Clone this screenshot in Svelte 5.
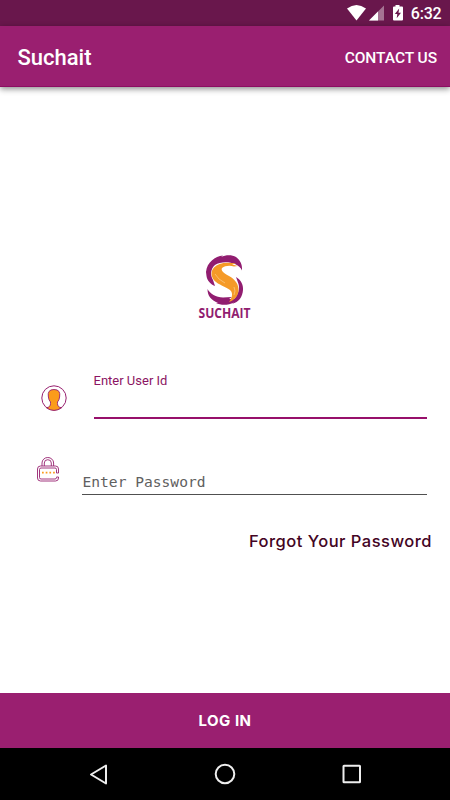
<script lang="ts">
let userId = $state('')
let password = $state('')
</script>

<div class="screen">
  <div class="status">
    <svg class="status__icons" viewBox="0 0 60 26" aria-hidden="true">
      <path d="M0 8.500Q9.500 1.500 19 8.500L9.500 20.500Z" fill="#fff" />
      <path d="M22 20.500L37 5.500V20.500Z" fill="#fff" opacity=".4" />
      <path d="M22 20.500L31 11.500V20.500Z" fill="#fff" />
      <path
        d="M46 6.500h2.500V5h4v1.500H55q1 0 1 1V19.500q0 1-1 1H47q-1 0-1-1V7.500q0-1 1-1ZM52.200 8.500L47.800 14H50.300L49.700 18.300L54 12.700H51.500Z"
        fill="#fff"
        fill-rule="evenodd"
      />
    </svg>
    <span class="status__time">6:32</span>
  </div>

  <header class="toolbar">
    <span class="toolbar__title">Suchait</span>
    <span class="toolbar__action">CONTACT US</span>
  </header>

  <main class="content">
    <svg class="logo" viewBox="0 0 64 76" aria-label="Suchait">
      <g transform="translate(5 0)">
        <g fill="#911d70">
          <path d="M8 19C9 9 17 3.500 25 2.500L23 4C28 1.500 34 1.500 38 4C42 7 44.500 11 44 17.500C43 14.500 40 12.500 37 11C31 8.500 22 8.500 17 12C12.500 16 12 22 15 27L17 33C12 31 9 27 8.500 23Z" />
          <path d="M38 24C43 27 45.500 32 45 37C44.500 44 41 49 34 51L36 49.500C30 52.500 23 52.500 18 50L20 50C13 47 9.500 43 9.500 36C12 41 18 44 25 44.500L34 44L31 46L36 46C40 42 42 36 40.500 31Z" />
        </g>
        <path d="M36 13.500C32 12 27 12.500 24 15C22.500 18 26 20 31 23C37 26.500 41 31 40.500 38C40 43 36.500 47 31 49C34 45 35 41 33 38C30 34.500 23 33 18 29C13 25 12 19 16 14.500C20 10 28 8.500 38 10.500L34 11.500L40 13Z" fill="#f59a27" />
        <path d="M17 21L21 26L27 30M36 34L37 38L36 42" fill="none" stroke="#fbd59d" stroke-width=".6" />
      </g>
      <text x="5.500" y="64.500" textLength="52" lengthAdjust="spacingAndGlyphs">SUCHAIT</text>
    </svg>

    <form class="form" onsubmit={(e) => e.preventDefault()}>
      <div class="user">
        <svg class="user__icon" viewBox="0 0 26 26" aria-hidden="true">
          <circle cx="13" cy="13" r="12.200" fill="#fff" stroke="#97206f" stroke-width="1" />
          <path
            d="M5.500 22.800Q9.700 22 9.500 18.500V17Q7.700 15 7.400 12Q6 4.500 13 4.500T18.600 12Q18.300 15 16.500 17V18.500Q16.300 22 20.500 22.800Q13 28 5.500 22.800Z"
            fill="#fb9c1a"
            stroke="#97206f"
            stroke-width=".9"
          />
        </svg>
        <div class="user__field">
          <label for="user-id">Enter User Id</label>
          <input id="user-id" bind:value={userId} />
        </div>
      </div>

      <div class="password">
        <svg class="password__icon" viewBox="0 0 22 25" aria-hidden="true">
          <g fill="none" stroke="#97206f" stroke-width=".9">
            <path d="M5 9V6A5.800 5.500 0 0 1 16.600 6V9M7.300 9V6A3.500 3.300 0 0 1 14.300 6V9" />
            <path d="M21.500 16V12Q21.500 9 18.500 9H3.500Q.5 9 .5 12V21Q.5 24 3.500 24H18.500Q21.500 24 21.500 21V20H19.500V20.500Q19.500 22 18 22H4Q2.500 22 2.500 20.500V12.500Q2.500 11 4 11H18Q19.500 11 19.500 12.500V16Z" />
          </g>
          <path d="M5 15.700H18" stroke="#fb9c1a" stroke-width="1.700" stroke-dasharray="1.700 2" />
        </svg>
        <input
          class="password__input"
          type="password"
          placeholder="Enter Password"
          bind:value={password}
        />
      </div>

      <span class="forgot">Forgot Your Password</span>
    </form>
  </main>

  <button class="login">LOG IN</button>

  <nav class="navbar">
    <svg viewBox="0 0 24 24"><path d="M19 3.500V21.500L4 12.500Z" /></svg>
    <svg viewBox="0 0 24 24"><circle cx="12" cy="12" r="9.300" /></svg>
    <svg viewBox="0 0 24 24"><rect x="4.500" y="3.700" width="16.500" height="16.500" rx=".5" /></svg>
  </nav>
</div>

<style>
  :global(body) {
    margin: 0;
  }

  .screen {
    display: flex;
    flex-direction: column;
    width: 450px;
    height: 800px;
    background: #fff;
    font-family: Roboto, sans-serif;
    overflow: hidden;
  }

  .status {
    display: flex;
    align-items: center;
    justify-content: flex-end;
    gap: 4px;
    box-sizing: border-box;
    height: 26px;
    padding-right: 8.500px;
    background: #69174c;
    color: #fff;
  }

  .status__icons {
    width: 60px;
    height: 26px;
  }

  .status__time {
    font-size: 16px;
    font-weight: 500;
    line-height: 26px;
    padding-top: 2px;
    letter-spacing: -0.2px;
  }

  .toolbar {
    display: flex;
    align-items: center;
    justify-content: space-between;
    box-sizing: border-box;
    height: 61px;
    padding: 3px 13px 0 17.500px;
    background: #9a1f70;
    border-bottom: 1px solid #8c0d62;
    box-shadow: 0 2px 6px rgba(0, 0, 0, 0.45);
    color: #fff;
  }

  .toolbar__title {
    font-size: 22px;
    font-weight: 500;
  }

  .toolbar__action {
    font-size: 15.500px;
    font-weight: 500;
    letter-spacing: -0.05px;
  }

  .content {
    flex: 1;
    display: flex;
    flex-direction: column;
    padding-top: 166px;
  }

  .logo {
    align-self: center;
    width: 64px;
    height: 76px;
    overflow: visible;
  }

  .logo text {
    font: 700 14px "Open Sans", sans-serif;
    fill: #911d70;
  }

  .form {
    display: flex;
    flex-direction: column;
    padding: 44px 23px 0 37px;
  }

  .user {
    display: flex;
    gap: 27px;
    height: 46px;
    padding-left: 3.500px;
  }

  .user__icon {
    width: 26px;
    height: 26px;
    margin-top: 12px;
  }

  .user__field {
    flex: 1;
    display: flex;
    flex-direction: column;
  }

  .user__field label {
    font-size: 13px;
    line-height: 16px;
    color: #8c1463;
  }

  input {
    box-sizing: border-box;
    min-width: 0;
    padding: 0;
    border: 0;
    border-radius: 0;
    outline: 0;
    background: none;
  }

  .user__field input {
    flex: 1;
    border-bottom: 2px solid #97106b;
    font: 16px Roboto, sans-serif;
  }

  .password {
    display: flex;
    gap: 23px;
    height: 39px;
    margin-top: 37px;
  }

  .password__icon {
    width: 22px;
    height: 25px;
    margin-top: 0.500px;
  }

  .password__input {
    flex: 1;
    padding: 13px 0 0 0.500px;
    border-bottom: 1px solid #505050;
    font: 14.600px "DejaVu Sans Mono", monospace;
  }

  .password__input::placeholder {
    color: #606060;
    opacity: 1;
  }

  .forgot {
    align-self: flex-end;
    margin: 36px -5px 0 0;
    font: 500 16.500px/20px Inter, sans-serif;
    letter-spacing: 0.48px;
    color: #430424;
  }

  .login {
    height: 55px;
    padding: 0;
    border: 0;
    background: #9a1f70;
    color: #fff;
    font: 700 15px Inter, sans-serif;
    letter-spacing: 0.5px;
  }

  .navbar {
    display: flex;
    justify-content: space-between;
    align-items: center;
    box-sizing: border-box;
    height: 52px;
    padding: 0 87px;
    background: #000;
  }

  .navbar svg {
    width: 24px;
    height: 24px;
    fill: none;
    stroke: #eee;
    stroke-width: 2;
    stroke-linejoin: round;
  }
</style>
